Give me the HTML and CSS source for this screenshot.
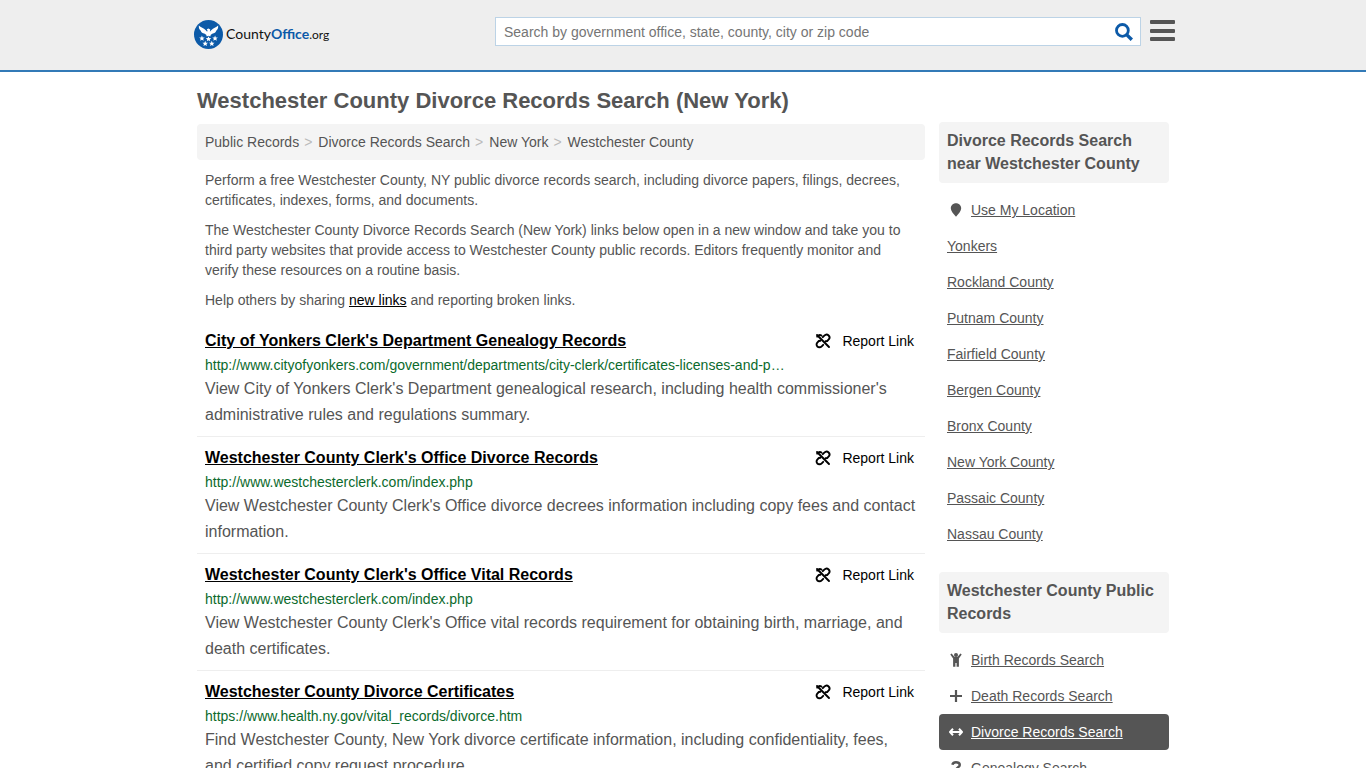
FILE: index.html
```html
<!DOCTYPE html>
<html lang="en">
<head>
<meta charset="utf-8">
<meta name="viewport" content="width=device-width, initial-scale=1">
<title>Westchester County Divorce Records Search (New York)</title>
<link rel="stylesheet" href="styles.css">
</head>
<body>
<svg class="sprite" aria-hidden="true">
  <symbol id="unlink" viewBox="0 0 16 16">
    <g fill="none" stroke="currentColor" stroke-width="1.9" stroke-linecap="round" stroke-linejoin="round">
      <path d="M2 2 14 14"/>
      <path d="M2.2 3.6C3 2 5 1.6 6.4 2.6M7.8 4.2 9.3 2.7C10.6 1.4 12.5 1.4 13.6 2.5 14.8 3.7 14.7 5.5 13.5 6.7L12.2 8 10.6 8.3"/>
      <path d="M8.2 11.8 6.7 13.3C5.4 14.6 3.5 14.6 2.4 13.5 1.2 12.3 1.3 10.5 2.5 9.3L3.8 8 5.4 7.7"/>
    </g>
  </symbol>
</svg>
<header class="site-header">
  <div class="header-inner">
    <a class="logo" href="#">
      <svg class="logo-mark" viewBox="0 0 30 30" aria-hidden="true">
        <defs><path id="star" d="M0-2.9.8-.9 2.9-.8 1.3.5 1.8 2.5 0 1.4-1.8 2.5-1.3.5-2.9-.8-.8-.9Z"/></defs>
        <circle cx="15" cy="15" r="15" fill="#0c5aa8"/>
        <g fill="#fff">
          <path d="M5 5.8C7 8 10 8.2 12.2 10.6L13.6 12.2 14 10.8 13.2 9.6 15 8.8 16.8 9.8 16.4 12.2 17.8 10.6C20 8.2 23 8 25 5.8 25.2 8.6 24.4 10 23 11 22.4 12.8 21 13.8 19.4 14L17.4 15.2 16.8 17 15 16.2 13.2 17 12.6 15.2 10.6 14C9 13.8 7.6 12.8 7 11 5.6 10 4.8 8.6 5 5.8Z"/>
          <use href="#star" x="8.2" y="19"/><use href="#star" x="15" y="19.6"/><use href="#star" x="21.8" y="19"/>
          <use href="#star" x="11.6" y="24.4"/><use href="#star" x="18.4" y="24.4"/>
        </g>
      </svg>
      <span class="logo-text">County<b>Office</b><span class="logo-tld">.org</span></span>
    </a>
    <form class="search" role="search">
      <input class="search-input" type="text" aria-label="Search" placeholder="Search by government office, state, county, city or zip code">
      <button class="search-button" type="button" aria-label="Submit search">
        <svg viewBox="0 0 18 18" aria-hidden="true"><g fill="none" stroke="currentColor"><circle cx="7.4" cy="7.4" r="5.9" stroke-width="2.8"/><path d="M11.6 11.6 16.8 16.8" stroke-width="3.4"/></g></svg>
      </button>
    </form>
    <button class="menu-button" type="button" aria-label="Menu">
      <svg viewBox="0 0 25 22" aria-hidden="true"><g fill="currentColor"><rect width="25" height="4" rx="1"/><rect y="9" width="25" height="4" rx="1"/><rect y="17" width="25" height="4" rx="1"/></g></svg>
    </button>
  </div>
</header>
<div class="page">
  <main class="main">
    <h1 class="page-title">Westchester County Divorce Records Search (New York)</h1>
    <nav class="breadcrumb" aria-label="Breadcrumb">
      <a href="#">Public Records</a><span class="sep">&gt;</span><a href="#">Divorce Records Search</a><span class="sep">&gt;</span><a href="#">New York</a><span class="sep">&gt;</span><a href="#">Westchester County</a>
    </nav>
    <div class="intro">
      <p>Perform a free Westchester County, NY public divorce records search, including divorce papers, filings, decrees, certificates, indexes, forms, and documents.</p>
      <p>The Westchester County Divorce Records Search (New York) links below open in a new window and take you to third party websites that provide access to Westchester County public records. Editors frequently monitor and verify these resources on a routine basis.</p>
      <p>Help others by sharing <a href="#">new links</a> and reporting broken links.</p>
    </div>
    <article class="result">
      <div class="result-head"><a class="result-title" href="#">City of Yonkers Clerk's Department Genealogy Records</a><a class="report" href="#"><svg aria-hidden="true"><use href="#unlink"/></svg>Report Link</a></div>
      <div class="result-url">http://www.cityofyonkers.com/government/departments/city-clerk/certificates-licenses-and-p…</div>
      <p class="result-text">View City of Yonkers Clerk's Department genealogical research, including health commissioner's administrative rules and regulations summary.</p>
    </article>
    <article class="result">
      <div class="result-head"><a class="result-title" href="#">Westchester County Clerk's Office Divorce Records</a><a class="report" href="#"><svg aria-hidden="true"><use href="#unlink"/></svg>Report Link</a></div>
      <div class="result-url">http://www.westchesterclerk.com/index.php</div>
      <p class="result-text">View Westchester County Clerk's Office divorce decrees information including copy fees and contact information.</p>
    </article>
    <article class="result">
      <div class="result-head"><a class="result-title" href="#">Westchester County Clerk's Office Vital Records</a><a class="report" href="#"><svg aria-hidden="true"><use href="#unlink"/></svg>Report Link</a></div>
      <div class="result-url">http://www.westchesterclerk.com/index.php</div>
      <p class="result-text">View Westchester County Clerk's Office vital records requirement for obtaining birth, marriage, and death certificates.</p>
    </article>
    <article class="result">
      <div class="result-head"><a class="result-title" href="#">Westchester County Divorce Certificates</a><a class="report" href="#"><svg aria-hidden="true"><use href="#unlink"/></svg>Report Link</a></div>
      <div class="result-url">https://www.health.ny.gov/vital_records/divorce.htm</div>
      <p class="result-text">Find Westchester County, New York divorce certificate information, including confidentiality, fees, and certified copy request procedure.</p>
    </article>
  </main>
  <aside class="sidebar">
    <section>
      <h2 class="side-title">Divorce Records Search near Westchester County</h2>
      <ul class="side-list">
        <li><a href="#"><svg viewBox="0 0 16 16" aria-hidden="true"><path fill="currentColor" d="M8 1.2C11 1.2 13.2 3.4 13.2 6.2 13.2 9 10.6 11.6 8 14.8 5.4 11.6 2.8 9 2.8 6.2 2.8 3.4 5 1.2 8 1.2Z"/></svg><span>Use My Location</span></a></li>
        <li><a href="#"><span>Yonkers</span></a></li>
        <li><a href="#"><span>Rockland County</span></a></li>
        <li><a href="#"><span>Putnam County</span></a></li>
        <li><a href="#"><span>Fairfield County</span></a></li>
        <li><a href="#"><span>Bergen County</span></a></li>
        <li><a href="#"><span>Bronx County</span></a></li>
        <li><a href="#"><span>New York County</span></a></li>
        <li><a href="#"><span>Passaic County</span></a></li>
        <li><a href="#"><span>Nassau County</span></a></li>
      </ul>
    </section>
    <section>
      <h2 class="side-title">Westchester County Public Records</h2>
      <ul class="side-list">
        <li><a href="#"><svg viewBox="0 0 16 16" aria-hidden="true"><g fill="currentColor"><circle cx="8" cy="3" r="2"/><path d="M3.6 1.4 6.4 4.8H9.6L12.4 1.4 13.7 2.5 10.9 6.6V14.8H8.6V11H7.4V14.8H5.1V6.6L2.3 2.5Z"/></g></svg><span>Birth Records Search</span></a></li>
        <li><a href="#"><svg viewBox="0 0 16 16" aria-hidden="true"><path d="M8 2V14M2 8H14" fill="none" stroke="currentColor" stroke-width="2.2"/></svg><span>Death Records Search</span></a></li>
        <li><a class="current" href="#" aria-current="page"><svg viewBox="0 0 16 16" aria-hidden="true"><path d="M5 4.8 2 8 5 11.2M11 4.8 14 8 11 11.2M2 8H14" fill="none" stroke="currentColor" stroke-width="2" stroke-linejoin="round"/></svg><span>Divorce Records Search</span></a></li>
        <li><a href="#"><svg viewBox="0 0 16 16" aria-hidden="true"><path d="M4.4 4.8C4.8 2.6 6.2 2.2 8 2.2 10.2 2.2 11.8 3.2 11.8 5 11.8 7.4 8.2 7.2 8.2 10" fill="none" stroke="currentColor" stroke-width="2.4"/><circle cx="8.2" cy="13.2" r="1.5" fill="currentColor"/></svg><span>Genealogy Search</span></a></li>
      </ul>
    </section>
  </aside>
</div>
</body>
</html>
```
FILE: styles.css
```css
* { box-sizing: border-box; }
body {
  margin: 0;
  background: #fff;
  color: #555;
  font: 14px/20px "Liberation Sans", Arial, sans-serif;
}
h1, h2, p, ul { margin: 0; padding: 0; }
.sprite { display: none; }

.site-header {
  background: #eee;
  border-bottom: 2px solid #337ab7;
}
.header-inner {
  display: flex;
  align-items: flex-start;
  max-width: 984px;
  height: 70px;
  margin: 0 auto;
  padding-top: 17px;
}
.logo {
  display: flex;
  align-items: center;
  gap: 3px;
  margin: 3px auto 0 3px;
  color: #111;
  text-decoration: none;
}
.logo-mark { width: 29px; height: 29px; }
.logo-text { font: 14px/20px Lato, sans-serif; }
.logo-text b { color: #0c5aa8; }
.logo-tld { font-size: 12px; }
.search {
  display: flex;
  flex: 0 1 646px;
  height: 29px;
  background: #fff;
  border: 1px solid #bcd3e6;
}
.search-input {
  flex: 1;
  min-width: 0;
  padding: 0 8px;
  border: 0;
  background: none;
  color: #555;
  font: inherit;
}
.search-input::placeholder { color: #757575; }
.search-button, .menu-button {
  padding: 0;
  border: 0;
  background: none;
  cursor: pointer;
}
.search-button { width: 32px; color: #0c5aa8; }
.search-button svg { display: block; width: 18px; height: 18px; margin: 0 auto; }
.menu-button { margin: 3px 0 0 9px; color: #555; }
.menu-button svg { display: block; width: 25px; height: 22px; }

.page {
  display: flex;
  gap: 14px;
  max-width: 972px;
  margin: 0 auto;
}
.main { flex: 1; min-width: 0; padding-top: 16px; }
.page-title { margin-bottom: 10px; font-size: 22px; line-height: 26px; }
.breadcrumb {
  padding: 8px;
  border-radius: 4px;
  background: #f4f4f4;
}
.breadcrumb a { color: inherit; text-decoration: none; }
.sep { padding: 0 6px 0 5px; color: #bbb; }
.intro { padding: 0 8px; }
.intro p { margin: 10px 0; }
.intro a { color: #000; }

.result { padding: 8px; border-bottom: 1px solid #eee; }
.result-head {
  display: flex;
  justify-content: space-between;
  padding-right: 3px;
  line-height: 26px;
}
.result-title { color: #000; font-size: 16px; font-weight: bold; }
.report {
  display: flex;
  align-items: center;
  gap: 11px;
  color: #000;
  text-decoration: none;
}
.report svg { width: 16px; height: 16px; }
.result-url {
  color: #0b6a2c;
  line-height: 22px;
  overflow-wrap: anywhere;
}
.result-text { font-size: 16px; line-height: 26px; }

.sidebar { flex: 0 0 230px; padding-top: 50px; }
.side-title {
  padding: 7px 8px 8px;
  border-radius: 4px;
  background: #f4f4f4;
  font-size: 16px;
  line-height: 23px;
}
.side-list { margin: 9px 0 20px; list-style: none; }
.side-list a {
  display: flex;
  align-items: center;
  gap: 6px;
  padding: 8px;
  border-radius: 4px;
  color: inherit;
  text-decoration: none;
}
.side-list span { text-decoration: underline; }
.side-list svg { width: 18px; height: 16px; }
.side-list .current { background: #555; color: #fff; }
```
